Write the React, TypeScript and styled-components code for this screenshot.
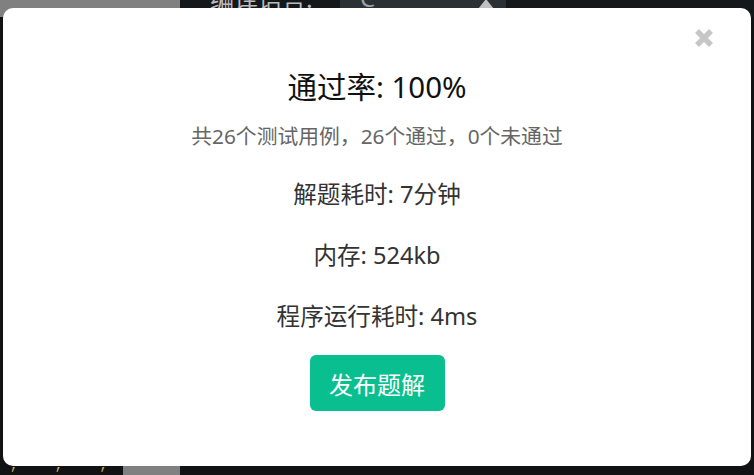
import React from "react";
import styled, { createGlobalStyle } from "styled-components";

const Global = createGlobalStyle`
  html, body { margin: 0; padding: 0; }
  body {
    width: 754px;
    height: 475px;
    overflow: hidden;
    background: #111213;
    font-family: "Noto Sans", "Noto Sans CJK SC", sans-serif;
  }
`;

const Page = styled.div`
  position: relative;
  width: 754px;
  height: 475px;
  display: flex;
  flex-direction: column;
  overflow: hidden;
`;

const Header = styled.div`
  display: flex;
  height: 40px;
  margin-top: -23px;
  background: #14181b;
  flex-shrink: 0;
`;

const GrayBlock = styled.div<{ $w: number }>`
  width: ${(p) => p.$w}px;
  background: #808080;
  flex-shrink: 0;
`;

const Label = styled.div`
  margin-left: 30px;
  display: flex;
  align-items: center;
  color: #b9bcbf;
  font-size: 24px;
  font-family: "Noto Sans CJK SC", sans-serif;
  width: 130px;
`;

const Select = styled.div`
  width: 166px;
  background: #2a3034;
  display: flex;
  align-items: center;
  justify-content: space-between;
  padding: 0 12px 0 20px;
  box-sizing: border-box;
  color: #9aa0a4;
  font-size: 24px;
`;

const Arrow = styled.span`
  width: 0;
  height: 0;
  border-left: 8px solid transparent;
  border-right: 8px solid transparent;
  border-bottom: 10px solid #c0c0c0;
  margin-top: 14px;
`;

const Body = styled.div`
  flex: 1;
  background: #111213;
`;

const Footer = styled.div`
  display: flex;
  height: 20px;
  background: #111213;
  flex-shrink: 0;
`;

const Code = styled.div`
  width: 123px;
  color: #c9b458;
  font-family: "Liberation Mono", monospace;
  font-size: 14px;
  letter-spacing: 14px;
  padding-left: 10px;
  box-sizing: border-box;
  line-height: 20px;
  overflow: hidden;
  white-space: nowrap;
`;

const Overlay = styled.div`
  position: absolute;
  left: 3px;
  top: 8px;
  width: 748px;
  height: 458px;
  background: #ffffff;
  border-radius: 10px;
  display: flex;
  flex-direction: column;
  align-items: center;
  padding-top: 59px;
  box-sizing: border-box;
`;

const Close = styled.button`
  position: absolute;
  right: 37px;
  top: 20px;
  width: 20px;
  height: 20px;
  padding: 0;
  border: 0;
  background: transparent;
  cursor: pointer;
  display: flex;
  align-items: center;
  justify-content: center;
`;

const Title = styled.div`
  font-size: 29.5px;
  line-height: 40px;
  color: #111;
  font-family: "Noto Sans", "Noto Sans CJK SC", sans-serif;
`;

const Sub = styled.div`
  margin-top: 15px;
  font-size: 20.8px;
  line-height: 28px;
  color: #666;
`;

const Stat = styled.div<{ $mt: number }>`
  margin-top: ${(p) => p.$mt}px;
  font-size: 23.6px;
  line-height: 32px;
  color: #333;
`;

const Publish = styled.button`
  margin-top: 23px;
  width: 135px;
  height: 56px;
  border: 0;
  border-radius: 6px;
  background: #0abf8f;
  color: #fff;
  font-size: 24px;
  font-family: "Noto Sans CJK SC", sans-serif;
  cursor: pointer;
`;

export default function App() {
  return (
    <>
      <Global />
      <Page>
        <Header>
          <GrayBlock $w={180} />
          <Label>编译语言:</Label>
          <Select>
            <span>C</span>
            <Arrow />
          </Select>
        </Header>
        <Body />
        <Footer>
          <Code>,^,',</Code>
          <GrayBlock $w={57} />
        </Footer>
        <Overlay>
          <Close aria-label="关闭">
            <svg width="20" height="20" viewBox="0 0 20 20">
              <path
                d="M3 3 L17 17 M17 3 L3 17"
                stroke="#c6c6c6"
                strokeWidth="5.5"
                strokeLinecap="butt"
              />
            </svg>
          </Close>
          <Title>通过率: 100%</Title>
          <Sub>共26个测试用例，26个通过，0个未通过</Sub>
          <Stat $mt={28}>解题耗时: 7分钟</Stat>
          <Stat $mt={29}>内存: 524kb</Stat>
          <Stat $mt={29}>程序运行耗时: 4ms</Stat>
          <Publish>发布题解</Publish>
        </Overlay>
      </Page>
    </>
  );
}
